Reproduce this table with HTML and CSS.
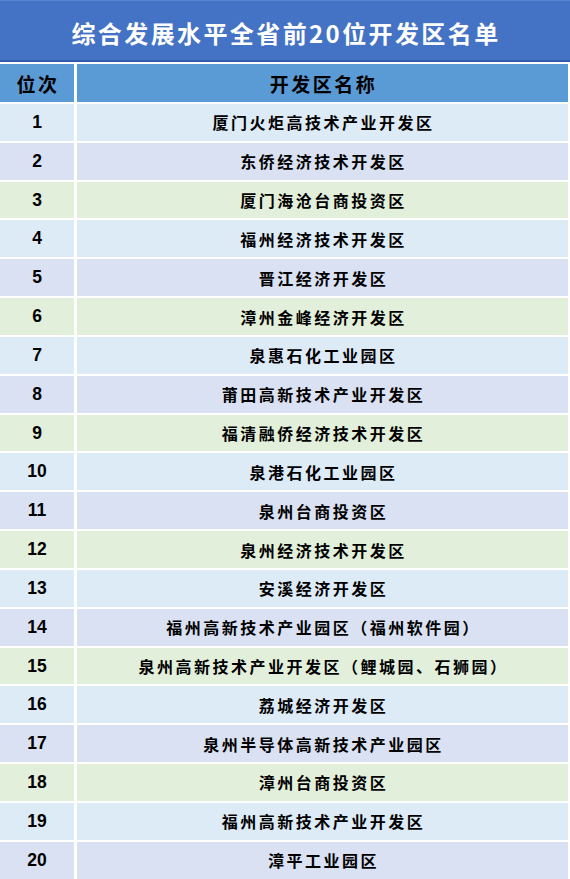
FILE: index.html
```html
<!DOCTYPE html>
<html lang="zh-CN">
<head>
<meta charset="utf-8">
<title>综合发展水平全省前20位开发区名单</title>
<link rel="stylesheet" href="styles.css">
</head>
<body>
<div class="page">
  <div class="title">综合发展水平全省前20位开发区名单</div>
  <div class="table">
    <div class="hcell">位次</div><div class="hcell">开发区名称</div>
    <div class="c blue num">1</div><div class="c blue">厦门火炬高技术产业开发区</div>
    <div class="c lav num">2</div><div class="c lav">东侨经济技术开发区</div>
    <div class="c green num">3</div><div class="c green">厦门海沧台商投资区</div>
    <div class="c blue num">4</div><div class="c blue">福州经济技术开发区</div>
    <div class="c lav num">5</div><div class="c lav">晋江经济开发区</div>
    <div class="c green num">6</div><div class="c green">漳州金峰经济开发区</div>
    <div class="c blue num">7</div><div class="c blue">泉惠石化工业园区</div>
    <div class="c lav num">8</div><div class="c lav">莆田高新技术产业开发区</div>
    <div class="c green num">9</div><div class="c green">福清融侨经济技术开发区</div>
    <div class="c blue num">10</div><div class="c blue">泉港石化工业园区</div>
    <div class="c lav num">11</div><div class="c lav">泉州台商投资区</div>
    <div class="c green num">12</div><div class="c green">泉州经济技术开发区</div>
    <div class="c blue num">13</div><div class="c blue">安溪经济开发区</div>
    <div class="c lav num">14</div><div class="c lav">福州高新技术产业园区（福州软件园）</div>
    <div class="c green num">15</div><div class="c green">泉州高新技术产业开发区（鲤城园、石狮园）</div>
    <div class="c blue num">16</div><div class="c blue">荔城经济开发区</div>
    <div class="c lav num">17</div><div class="c lav">泉州半导体高新技术产业园区</div>
    <div class="c green num">18</div><div class="c green">漳州台商投资区</div>
    <div class="c blue num">19</div><div class="c blue">福州高新技术产业开发区</div>
    <div class="c lav num">20</div><div class="c lav">漳平工业园区</div>
  </div>
</div>
</body>
</html>
```
FILE: styles.css
```css
html, body {
  margin: 0;
  padding: 0;
  background: #ffffff;
}
body {
  font-family: "Noto Sans CJK SC", "Liberation Sans", sans-serif;
  color: #000;
}
.page {
  width: 570px;
  height: 879px;
  overflow: hidden;
}
.title {
  background: #4472c4;
  border-top: 1px solid #5a85d0;
  border-bottom: 2px solid #2f5aa8;
  box-sizing: border-box;
  height: 62px;
  display: flex;
  align-items: center;
  justify-content: center;
  color: #ffffff;
  font-size: 24px;
  font-weight: 700;
  letter-spacing: 2.4px;
  padding-left: 2px;
  padding-top: 4px;
}
.table {
  margin-top: 2px;
  width: 568px;
  display: grid;
  grid-template-columns: 74px 491px;
  grid-template-rows: 38px;
  grid-auto-rows: 36.84px;
  column-gap: 3px;
  row-gap: 2px;
}
.hcell {
  background: #5b9bd5;
  display: flex;
  align-items: center;
  justify-content: center;
  font-size: 19px;
  font-weight: 700;
  letter-spacing: 2.5px;
  padding-left: 2px;
}
.c {
  display: flex;
  align-items: center;
  justify-content: center;
  font-size: 16px;
  font-weight: 700;
  letter-spacing: 2.5px;
  padding-left: 2px;
  white-space: nowrap;
}
.num {
  font-family: "Liberation Sans", sans-serif;
  font-size: 17.5px;
  letter-spacing: 0;
  padding-left: 0;
}
.blue { background: #ddebf7; }
.lav { background: #d9e1f2; }
.green { background: #e2efda; }
```
